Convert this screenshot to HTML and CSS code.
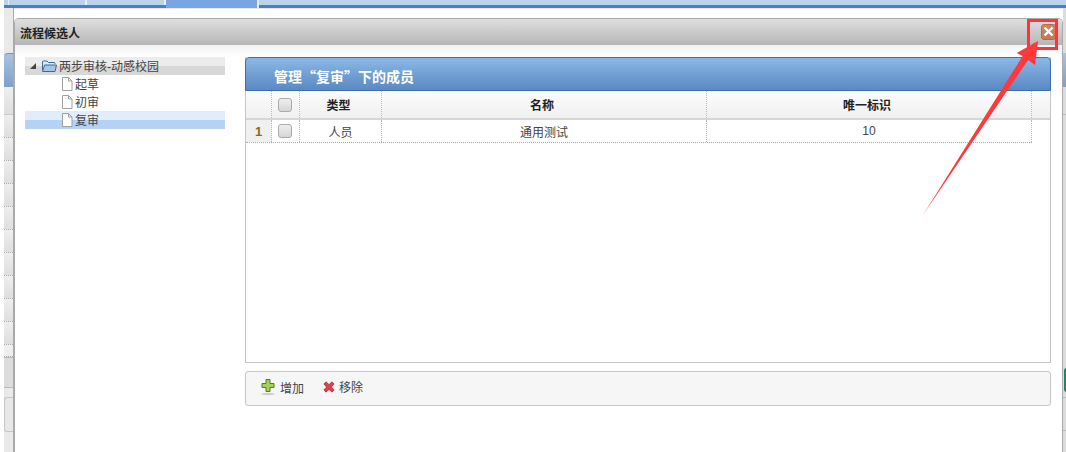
FILE: index.html
```html
<!DOCTYPE html>
<html lang="zh-CN">
<head>
<meta charset="utf-8">
<title>流程候选人</title>
<link rel="stylesheet" href="styles.css">
</head>
<body>
<div class="desktop">
  <div class="topbar">
    <span class="tab t1"></span><span class="tab t2"></span><span class="tab t3"></span><span class="tab t4"></span>
  </div>
  <div class="under">
    <div class="under-head"></div>
    <div class="under-row first"></div><div class="under-row"></div><div class="under-row"></div><div class="under-row"></div><div class="under-row"></div><div class="under-row"></div><div class="under-row"></div><div class="under-row"></div><div class="under-row"></div><div class="under-row"></div><div class="under-row"></div><div class="under-row short"></div>
    <div class="under-pager"></div>
    <div class="under-foot"></div>
  </div>
  <div class="under-right">
    <div class="under-right-head"></div>
    <div class="under-right-line"></div>
    <div class="under-right-badge"></div>
    <div class="under-right-foot"></div>
  </div>

  <section class="dialog">
    <header class="dialog-head">
      <h1 class="dialog-title">流程候选人</h1>
      <button class="close" aria-label="关闭">
        <svg width="11" height="11" viewBox="0 0 11 11"><path d="M1.5 1.5 L9.5 9.5 M9.5 1.5 L1.5 9.5" stroke="#fff" stroke-width="2.4"/></svg>
      </button>
    </header>
    <div class="dialog-body">
      <aside class="tree">
        <div class="node root">
          <svg class="twist" width="8" height="8" viewBox="0 0 8 8"><path d="M7 1 V7 H1 Z" fill="#444"/></svg>
          <svg class="folder" width="16" height="14" viewBox="0 0 16 14"><path d="M1.5 11 V3 Q1.5 2 2.5 2 H6 L7.5 3.5 H13 Q14 3.5 14 4.5 V5" fill="#dfe9f5" stroke="#3f6a96"/><path d="M1.5 12.5 L3.5 6 H15.5 L14 12.5 Z" fill="#a9c4e4" stroke="#3f6a96"/></svg>
          <span class="label">两步审核-动感校园</span>
        </div>
        <div class="node leaf"><svg class="file" width="12" height="14" viewBox="0 0 12 14"><path d="M1.5 .5 H7.5 L11 4 V13.5 H1.5 Z M7.5 .5 V4 H11" fill="#fff" stroke="#a0a0a0"/></svg><span class="label">起草</span></div>
        <div class="node leaf"><svg class="file" width="12" height="14" viewBox="0 0 12 14"><path d="M1.5 .5 H7.5 L11 4 V13.5 H1.5 Z M7.5 .5 V4 H11" fill="#fff" stroke="#a0a0a0"/></svg><span class="label">初审</span></div>
        <div class="node leaf selected"><svg class="file" width="12" height="14" viewBox="0 0 12 14"><path d="M1.5 .5 H7.5 L11 4 V13.5 H1.5 Z M7.5 .5 V4 H11" fill="#fff" stroke="#a0a0a0"/></svg><span class="label">复审</span></div>
      </aside>
      <main class="content">
        <div class="panel">
          <div class="panel-head">管理“复审”下的成员</div>
          <div class="grid-head">
            <div class="c c-num"></div>
            <div class="c c-check"><span class="checkbox"></span></div>
            <div class="c c-type">类型</div>
            <div class="c c-name">名称</div>
            <div class="c c-id">唯一标识</div>
            <div class="c c-fill"></div>
          </div>
          <div class="grid-row">
            <div class="c c-num">1</div>
            <div class="c c-check"><span class="checkbox"></span></div>
            <div class="c c-type">人员</div>
            <div class="c c-name">通用测试</div>
            <div class="c c-id">10</div>
          </div>
        </div>
        <div class="toolbar">
          <button class="tool">
            <svg width="16" height="18" viewBox="0 0 16 18"><ellipse cx="8" cy="16" rx="7" ry="1.2" fill="#ccc"/><path d="M6 1.5 H10 V5.5 H14 V9.5 H10 V13.5 H6 V9.5 H2 V5.5 H6 Z" fill="#a6d05a" stroke="#4f7f1c"/></svg>
            <span>增加</span>
          </button>
          <button class="tool">
            <svg width="12" height="12" viewBox="0 0 14 14"><path d="M3.5 1 L7 4.2 L10.5 1 L13 3.5 L9.8 7 L13 10.5 L10.5 13 L7 9.8 L3.5 13 L1 10.5 L4.2 7 L1 3.5 Z" fill="#e0404a" stroke="#8f2a30" stroke-width=".8"/></svg>
            <span>移除</span>
          </button>
        </div>
      </main>
    </div>
  </section>

  <svg class="annotation" width="1066" height="452" viewBox="0 0 1066 452">
    <rect x="1028.5" y="20.5" width="28" height="28" fill="none" stroke="#ff3338" stroke-width="3"/>
    <path d="M923 215 L1022.7 56 L1016.7 53 L1038 41 L1035 65 L1028 60 Z" fill="#ff383c"/>
  </svg>
</div>
</body>
</html>
```
FILE: styles.css
```css
* { box-sizing: border-box; }
html, body { margin: 0; padding: 0; background: #fff; overflow: hidden; }
body { font-family: "Liberation Sans", "Noto Sans CJK SC", sans-serif; font-size: 12px; color: #333; }
.desktop { position: relative; width: 1066px; height: 452px; overflow: hidden; background: #fff; }

.topbar { position: absolute; left: 4px; right: 0; top: 0; height: 8px; display: flex; background: #bcd3ec; border-bottom: 3px solid #4a7fc8; padding-left: 4px; box-shadow: 0 1px 0 #e8e8e8; }
.tab { height: 8px; border-right: 2px solid #e6eef8; }
.t1 { width: 1px; height: 5px; border-right: 0; background: #e6eef8; }
.t2 { width: 78px; height: 5px; }
.t3 { width: 79px; height: 5px; }
.t4 { width: 93px; background: #78a6e0; }

.under { position: absolute; left: 4px; top: 8px; width: 10px; height: 444px; background: #e9e9e9; display: flex; flex-direction: column; padding-top: 45px; border-right: 1px solid #aaa; }
.under-head { height: 34px; flex: none; background: linear-gradient(#a9c4e2, #7f9fc6); border-top: 1px solid #6d93c2; border-top-left-radius: 4px; }
.under-row { height: 23px; flex: none; background: linear-gradient(#eeeeee, #dedede); border-bottom: 1px dotted #aaa; }
.under-row.first { height: 28px; border-bottom-style: solid; border-bottom-color: #ccc; }
.under-row.short { height: 12px; background: #eee; }
.under-pager { height: 31px; background: #dcdcdc; border-top: 1px solid #bbb; border-bottom: 1px solid #bbb; flex: none; }
.under-foot { height: 35px; margin-top: 9px; flex: none; background: #e8e8e8; border: 1px solid #c6c6c6; border-right: 0; border-radius: 3px 0 0 3px; }

.under-right { position: absolute; right: 0; top: 8px; width: 3px; height: 444px; background: #dcdcdc; padding-top: 45px; display: flex; flex-direction: column; }
.under-right-head { height: 34px; flex: none; background: linear-gradient(#a9c4e2, #7f9fc6); }
.under-right-line { height: 28px; flex: none; border-bottom: 1px solid #bbb; }
.under-right-badge { height: 26px; flex: none; margin-top: 252px; background: #2f7f68; border-radius: 3px 0 0 3px; border: 1px solid #ddd; border-right: 0; }
.under-right-foot { height: 34px; flex: none; margin-top: 4px; border-top: 1px solid #bbb; border-bottom: 1px solid #bbb; }

.dialog { position: absolute; left: 14px; top: 18px; width: 1049px; height: 434px; background: #fff; border: 1px solid #aaa; border-bottom: 0; border-radius: 5px 5px 0 0; display: flex; flex-direction: column; }
.dialog-head { height: 26px; flex: none; display: flex; align-items: center; justify-content: space-between; padding: 0 6px 0 5px; background: linear-gradient(#dfdfdf, #b6b6b6); border-radius: 4px 4px 0 0; }
.dialog-title { margin: 0; padding-top: 3px; font-size: 12px; font-weight: 700; color: #222; line-height: 26px; }
.close { width: 15px; height: 16px; padding: 0; margin: 0 0 1px 0; border: 1px solid #b46a48; border-radius: 3px; background: linear-gradient(#d9805a, #c67a58); display: flex; align-items: center; justify-content: center; }

.dialog-body { flex: 1; display: flex; padding: 12px 10px 0 10px; background: linear-gradient(#f2f2f2 0, #fff 12px); gap: 20px; }
.tree { width: 200px; flex: none; }
.node { height: 18px; display: flex; align-items: center; white-space: nowrap; color: #444; }
.label { margin-bottom: 2px; }
.root { background: linear-gradient(#ececec 50%, #d8d8d8 50%); padding-left: 4px; }
.twist { margin-right: 4px; }
.folder { margin-right: 2px; }
.leaf { padding-left: 36px; }
.file { margin-right: 2px; margin-bottom: 1px; }
.selected { background: linear-gradient(#e1edfb 50%, #b4d2f5 50%); }

.content { width: 806px; flex: none; display: flex; flex-direction: column; gap: 8px; }
.panel { height: 306px; border: 1px solid #c6c6c6; border-top: 0; }
.panel-head { height: 34px; margin: 0 -1px; padding-left: 28px; line-height: 36px; font-family: "Noto Sans CJK SC", sans-serif; font-size: 14px; font-weight: 700; color: #fff; background: linear-gradient(#8ab8e6, #5a88c2); border: 1px solid #3f6db0; border-radius: 4px 4px 0 0; }
.grid-head { height: 29px; display: flex; background: linear-gradient(#fcfcfc, #f0f0f0); border-bottom: 2px solid #d6d6d6; font-weight: 700; color: #222; }
.grid-head .c-type, .grid-head .c-name, .grid-head .c-id { padding-right: 4px; }
.grid-row { height: 23px; display: flex; width: 786px; border-bottom: 1px dotted #aaa; color: #444; }
.c { display: flex; align-items: center; justify-content: center; border-right: 1px dotted #bbb; flex: none; }
.c-num { width: 26px; color: #8a6a10; font-size: 13px; font-weight: 700; }
.grid-row .c-num { background: #f0f0f0; }
.c-check { width: 28px; padding-right: 2px; }
.c-type { width: 82px; }
.c-name { width: 325px; }
.c-id { width: 325px; }
.c-fill { flex: 1; border-right: 0; }
.checkbox { width: 14px; height: 14px; border: 1px solid #aaa; border-radius: 3px; background: linear-gradient(#eeeeee, #d6d6d6); }

.toolbar { height: 35px; display: flex; align-items: flex-start; gap: 19px; padding: 6px 0 0 14px; background: #f6f6f6; border: 1px solid #c6c6c6; border-radius: 3px; }
.tool { display: flex; align-items: center; gap: 4px; padding: 0; border: 0; background: none; font: inherit; color: #444; }

.annotation { position: absolute; left: 0; top: 0; pointer-events: none; }
```
